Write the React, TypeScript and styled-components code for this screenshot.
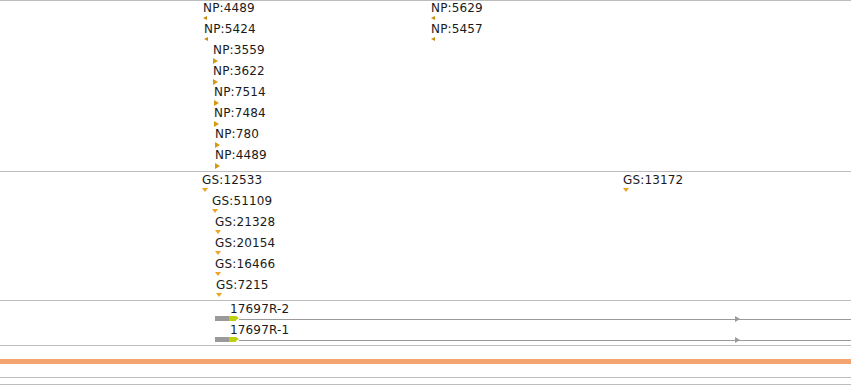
import React from "react";
import styled, { createGlobalStyle, css } from "styled-components";

const GlobalStyle = createGlobalStyle`
  html, body {
    margin: 0;
    padding: 0;
    background: #fff;
  }
  body {
    font-family: "DejaVu Sans", Verdana, sans-serif;
    font-size: 12px;
    color: #1a1a1a;
  }
`;

type Strand = "left" | "right" | "down";

type Feature = {
  name: string;
  x: number;
  strand: Strand;
};

// one array per row, features placed by their start coordinate
const npRows: Feature[][] = [
  [
    { name: "NP:4489", x: 203, strand: "left" },
    { name: "NP:5629", x: 431, strand: "left" },
  ],
  [
    { name: "NP:5424", x: 204, strand: "left" },
    { name: "NP:5457", x: 431, strand: "left" },
  ],
  [{ name: "NP:3559", x: 213, strand: "right" }],
  [{ name: "NP:3622", x: 213, strand: "right" }],
  [{ name: "NP:7514", x: 214, strand: "right" }],
  [{ name: "NP:7484", x: 214, strand: "right" }],
  [{ name: "NP:780", x: 215, strand: "right" }],
  [{ name: "NP:4489", x: 215, strand: "right" }],
];

const gsRows: Feature[][] = [
  [
    { name: "GS:12533", x: 202, strand: "down" },
    { name: "GS:13172", x: 623, strand: "down" },
  ],
  [{ name: "GS:51109", x: 212, strand: "down" }],
  [{ name: "GS:21328", x: 215, strand: "down" }],
  [{ name: "GS:20154", x: 215, strand: "down" }],
  [{ name: "GS:16466", x: 215, strand: "down" }],
  [{ name: "GS:7215", x: 216, strand: "down" }],
];

const transcripts = ["17697R-2", "17697R-1"];

const Page = styled.div`
  width: 851px;
  height: 385px;
  overflow: hidden;
  border-top: 1px solid #bcbcbc;
  display: flex;
  flex-direction: column;
`;

const Track = styled.div<{ $height: number; $pad: number }>`
  height: ${(p) => p.$height}px;
  padding-top: ${(p) => p.$pad}px;
  box-sizing: border-box;
  border-bottom: 1px solid #bcbcbc;
  flex-shrink: 0;
`;

const Row = styled.div`
  position: relative;
  height: 21px;
`;

const FeatureBox = styled.div`
  position: absolute;
  top: 0;
  display: flex;
  flex-direction: column;
  align-items: flex-start;
`;

const Label = styled.span`
  line-height: 13px;
  letter-spacing: 0.15px;
  white-space: nowrap;
`;

const Glyph = styled.span<{ $strand: Strand }>`
  display: block;
  width: 0;
  height: 0;
  ${(p) =>
    p.$strand === "left" &&
    css`
      margin-top: 1px;
      border-top: 2.5px solid transparent;
      border-bottom: 2.5px solid transparent;
      border-right: 4px solid #c88d0c;
    `}
  ${(p) =>
    p.$strand === "right" &&
    css`
      margin-top: 1px;
      border-top: 3px solid transparent;
      border-bottom: 3px solid transparent;
      border-left: 5px solid #d39a12;
    `}
  ${(p) =>
    p.$strand === "down" &&
    css`
      margin-top: 1px;
      border-left: 3px solid transparent;
      border-right: 3px solid transparent;
      border-top: 4px solid #f0a326;
    `}
`;

const GeneRow = styled.div`
  position: relative;
  height: 21px;
  padding-left: 215px;
  box-sizing: border-box;
  display: flex;
  flex-direction: column;
`;

const GeneLabel = styled.span`
  line-height: 13px;
  letter-spacing: 0.15px;
  margin-left: 15px;
  white-space: nowrap;
`;

const GeneModel = styled.div`
  display: flex;
  align-items: center;
  height: 5px;
`;

const Utr = styled.div`
  width: 14px;
  height: 5px;
  background: #9a9a9a;
`;

const Exon = styled.div`
  position: relative;
  width: 7px;
  height: 5px;
  background: #bfd10c;

  &::after {
    content: "";
    position: absolute;
    left: 7px;
    top: 0;
    border-top: 2.5px solid transparent;
    border-bottom: 2.5px solid transparent;
    border-left: 3px solid #bfd10c;
  }
`;

const Intron = styled.div`
  position: relative;
  flex: 1;
  height: 1px;
  margin-left: 3px;
  margin-top: 1px;
  background: #9a9a9a;
`;

const StrandArrow = styled.span`
  position: absolute;
  left: 496px;
  top: -3px;
  border-top: 3px solid transparent;
  border-bottom: 3px solid transparent;
  border-left: 5px solid #9a9a9a;
`;

const Gap = styled.div<{ $height: number }>`
  height: ${(p) => p.$height}px;
  flex-shrink: 0;
`;

const Ruler = styled.div<{ $color: string; $height: number }>`
  height: ${(p) => p.$height}px;
  background: ${(p) => p.$color};
  flex-shrink: 0;
`;

const FeatureRows = ({ rows }: { rows: Feature[][] }) => (
  <>
    {rows.map((row, i) => (
      <Row key={i}>
        {row.map((f) => (
          <FeatureBox key={f.name + f.x} style={{ left: f.x }}>
            <Label>{f.name}</Label>
            <Glyph $strand={f.strand} />
          </FeatureBox>
        ))}
      </Row>
    ))}
  </>
);

export default function App() {
  return (
    <>
      <GlobalStyle />
      <Page>
        <Track $height={171} $pad={1}>
          <FeatureRows rows={npRows} />
        </Track>
        <Track $height={129} $pad={2}>
          <FeatureRows rows={gsRows} />
        </Track>
        <Track $height={45} $pad={2}>
          {transcripts.map((t) => (
            <GeneRow key={t}>
              <GeneLabel>{t}</GeneLabel>
              <GeneModel>
                <Utr />
                <Exon />
                <Intron>
                  <StrandArrow />
                </Intron>
              </GeneModel>
            </GeneRow>
          ))}
        </Track>
        <Gap $height={13} />
        <Ruler $color="#f4a470" $height={5} />
        <Gap $height={13} />
        <Ruler $color="#bcbcbc" $height={1} />
        <Gap $height={6} />
        <Ruler $color="#bcbcbc" $height={1} />
      </Page>
    </>
  );
}
